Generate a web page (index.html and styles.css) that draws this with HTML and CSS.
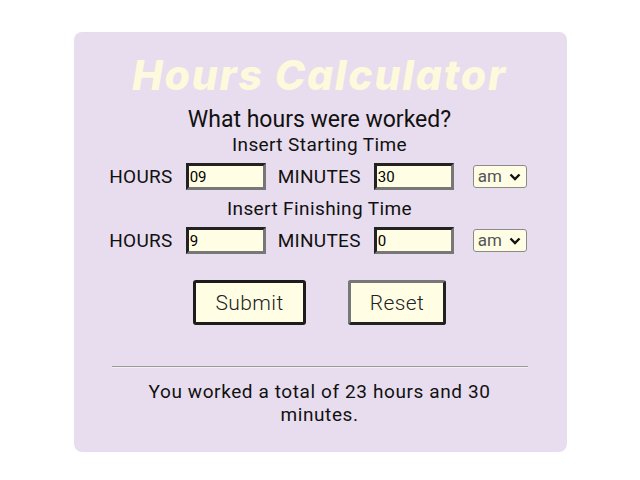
FILE: index.html
```html
<!DOCTYPE html>
<html>
<head>
<meta charset="utf-8">
<link rel="stylesheet" href="styles.css">
</head>
<body>
<div class="card">
  <h1 class="title">Hours Calculator</h1>
  <h2 class="question">What hours were worked?</h2>
  <p class="label">Insert Starting Time</p>
  <div class="row">
    <span class="field-label">HOURS</span>
    <input class="num" type="text" value="09">
    <span class="field-label">MINUTES</span>
    <input class="num" type="text" value="30">
    <span class="select-wrap">
      <select class="ampm"><option>am</option><option>pm</option></select>
      <svg class="chev" width="12" height="8" viewBox="0 0 12 8"><path d="M1.5 1.5 L6 6 L10.5 1.5" fill="none" stroke="#111" stroke-width="2.4"/></svg>
    </span>
  </div>
  <p class="label label-finish">Insert Finishing Time</p>
  <div class="row">
    <span class="field-label">HOURS</span>
    <input class="num" type="text" value="9">
    <span class="field-label">MINUTES</span>
    <input class="num" type="text" value="0">
    <span class="select-wrap">
      <select class="ampm"><option>am</option><option>pm</option></select>
      <svg class="chev" width="12" height="8" viewBox="0 0 12 8"><path d="M1.5 1.5 L6 6 L10.5 1.5" fill="none" stroke="#111" stroke-width="2.4"/></svg>
    </span>
  </div>
  <div class="buttons">
    <button class="btn btn-submit">Submit</button>
    <button class="btn btn-reset">Reset</button>
  </div>
  <hr class="divider">
  <p class="result">You worked a total of 23 hours and 30 minutes.</p>
</div>
</body>
</html>
```
FILE: styles.css
```css
html, body {
  margin: 0;
  padding: 0;
  background: #ffffff;
}
body {
  font-family: Roboto, "Liberation Sans", sans-serif;
  color: #111;
}
.card {
  width: 493px;
  box-sizing: border-box;
  margin: 32px auto 0;
  background: #e8ddee;
  border-radius: 8px;
  padding: 19px 39px 26px 38px;
  display: flex;
  flex-direction: column;
  align-items: center;
}
.title {
  margin: 0;
  font-family: Inter, sans-serif;
  font-weight: 800;
  font-style: italic;
  font-size: 41px;
  line-height: 48px;
  color: #fdf9dd;
  letter-spacing: 1.8px;
}
.question {
  margin: 8px 0 0;
  font-weight: 400;
  font-size: 23px;
  line-height: 26px;
  letter-spacing: 0px;
}
.label {
  margin: 0;
  font-size: 19px;
  line-height: 24px;
  letter-spacing: 0.4px;
}
.label-finish {
  margin-top: 7px;
}
.row {
  margin-top: 6px;
  display: flex;
  align-items: center;
  margin-left: -3px;
}
.field-label {
  font-size: 19px;
  letter-spacing: 0.3px;
  margin-right: 13px;
}
.num {
  width: 80px;
  height: 27px;
  box-sizing: border-box;
  border: 3px solid;
  border-color: #222 #777 #777 #222;
  background: #fffee4;
  font-family: Roboto, sans-serif;
  font-size: 15px;
  padding: 0 1px;
  margin-right: 12px;
  color: #000;
}
.select-wrap {
  position: relative;
  margin-left: 7px;
  display: inline-flex;
}
.ampm {
  appearance: none;
  -webkit-appearance: none;
  width: 54px;
  height: 23px;
  border: 1px solid #8a8a8a;
  border-radius: 3px;
  background: #fffee4;
  color: #555;
  font-family: Roboto, sans-serif;
  font-size: 17px;
  padding: 0 0 0 4px;
  line-height: 21px;
}
.chev {
  position: absolute;
  right: 6px;
  top: 8px;
  pointer-events: none;
}
.buttons {
  margin-top: 26px;
  display: flex;
  gap: 42px;
}
.btn {
  height: 45px;
  box-sizing: border-box;
  background: #fffee4;
  border: 3px solid #1c1c1c;
  border-radius: 3px;
  font-family: Roboto, sans-serif;
  font-weight: 300;
  font-size: 21px;
  letter-spacing: 0.4px;
  color: #222;
}
.btn-submit {
  width: 113px;
}
.btn-reset {
  width: 98px;
  border-color: #777 #222 #222 #777;
}
.divider {
  align-self: stretch;
  margin: 41px 0 0;
  border: 0;
  border-top: 1px solid #9a9a9a;
  border-bottom: 1px solid #f2eef4;
}
.result {
  margin: 12px 0 0;
  max-width: 380px;
  text-align: center;
  font-size: 19px;
  line-height: 23px;
  letter-spacing: 0.6px;
}
```
